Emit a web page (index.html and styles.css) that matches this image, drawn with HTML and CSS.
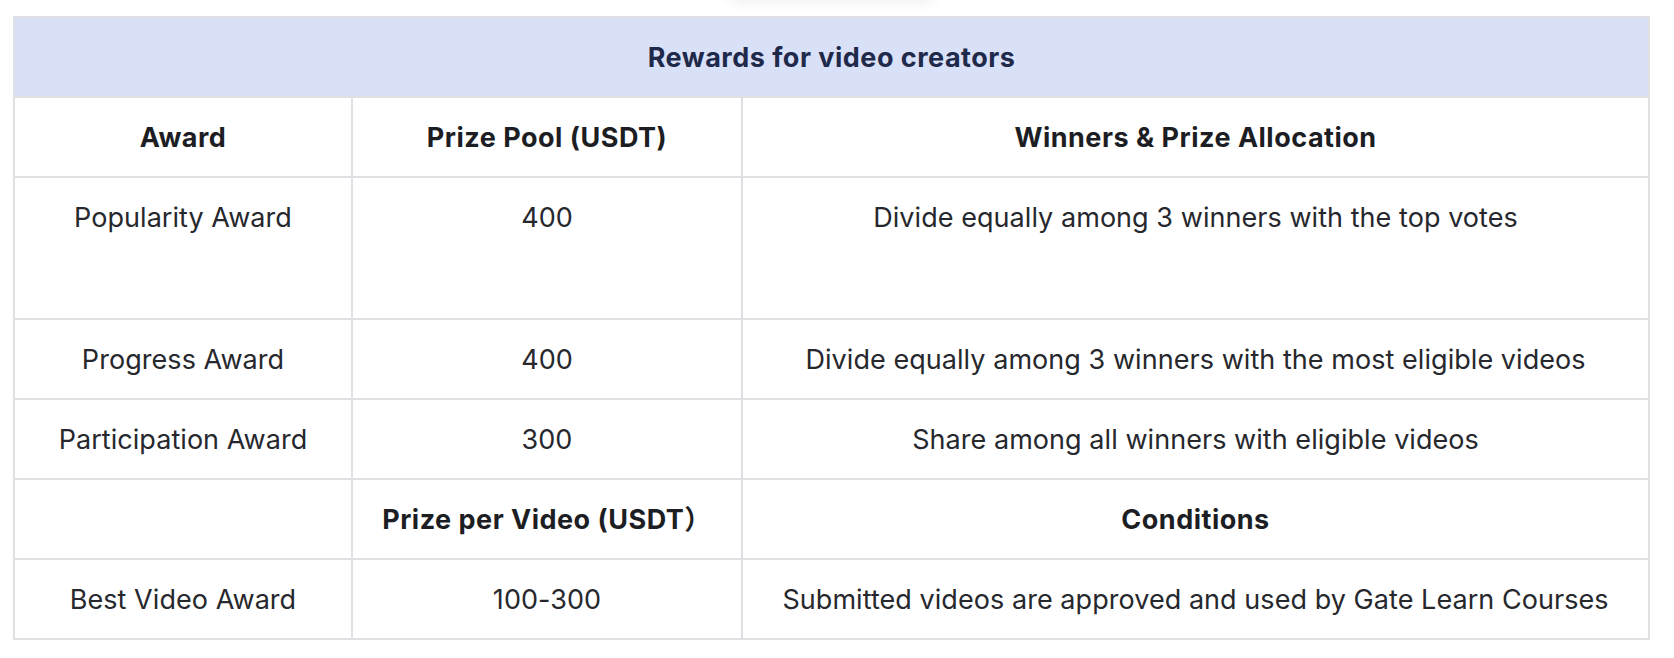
FILE: index.html
```html
<!DOCTYPE html>
<html lang="en">
<head>
<meta charset="utf-8">
<title>Rewards for video creators</title>
<link rel="stylesheet" href="styles.css">
</head>
<body>
<div class="page">
  <div class="top-shadow"></div>
  <table class="rewards">
    <colgroup>
      <col class="c1">
      <col class="c2">
      <col class="c3">
    </colgroup>
    <thead>
      <tr><th class="title" colspan="3">Rewards for video creators</th></tr>
    </thead>
    <tbody>
      <tr class="head">
        <td>Award</td>
        <td>Prize Pool (USDT)</td>
        <td>Winners &amp; Prize Allocation</td>
      </tr>
      <tr class="tall">
        <td>Popularity Award</td>
        <td>400</td>
        <td>Divide equally among 3 winners with the top votes</td>
      </tr>
      <tr>
        <td>Progress Award</td>
        <td>400</td>
        <td>Divide equally among 3 winners with the most eligible videos</td>
      </tr>
      <tr>
        <td>Participation Award</td>
        <td>300</td>
        <td>Share among all winners with eligible videos</td>
      </tr>
      <tr class="head">
        <td></td>
        <td>Prize per Video (USDT）</td>
        <td>Conditions</td>
      </tr>
      <tr>
        <td>Best Video Award</td>
        <td>100-300</td>
        <td>Submitted videos are approved and used by Gate Learn Courses</td>
      </tr>
    </tbody>
  </table>
</div>
</body>
</html>
```
FILE: styles.css
```css
html, body {
  margin: 0;
  padding: 0;
  background: #ffffff;
}

body {
  font-family: "Inter", "Noto Sans", "Liberation Sans", "Noto Sans CJK SC", sans-serif;
  color: #26282d;
}

.page {
  position: relative;
  padding: 16px 26px 0 13px;
}

.top-shadow {
  position: absolute;
  top: -40px;
  left: 727px;
  width: 208px;
  height: 40px;
  border-radius: 12px;
  background: #ffffff;
  box-shadow: 0 2px 14px rgba(0, 0, 0, 0.07);
}

.rewards {
  width: 1635px;
  border-collapse: collapse;
  table-layout: fixed;
  border: 2px solid #dfe0e4;
}

.c1 { width: 338px; }
.c2 { width: 390px; }
.c3 { width: 907px; }

.rewards th,
.rewards td {
  border: 2px solid #dfe0e4;
  text-align: center;
  vertical-align: top;
  font-size: 27px;
  line-height: 38px;
  padding: 21px 6px 19px 6px;
  white-space: nowrap;
}

.rewards td {
  font-weight: 400;
  color: #26282d;
  letter-spacing: 0.05px;
}

.rewards .title {
  background: #d9e1f9;
  color: #1f2a4b;
  font-weight: 700;
  letter-spacing: 0.5px;
  padding-top: 21px;
  padding-bottom: 19px;
}

.rewards .head td {
  font-weight: 700;
  color: #1c1e23;
  letter-spacing: 0.5px;
  padding-top: 21px;
  padding-bottom: 19px;
}

.rewards .tall td {
  padding-bottom: 81px;
}
```
